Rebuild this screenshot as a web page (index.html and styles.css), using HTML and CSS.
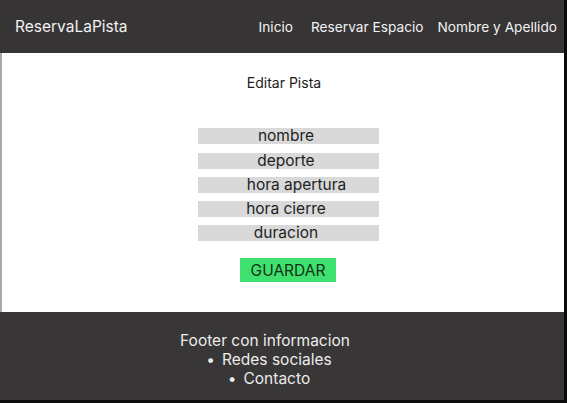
FILE: index.html
```html
<!DOCTYPE html>
<html lang="es">
<head>
<meta charset="utf-8">
<title>ReservaLaPista</title>
<link rel="stylesheet" href="styles.css">
</head>
<body>
<div class="page">
  <header class="topbar">
    <div class="brand">ReservaLaPista</div>
    <nav class="nav">
      <a href="#" class="nav-home">Inicio</a>
      <a href="#" class="nav-book">Reservar Espacio</a>
      <a href="#">Nombre y Apellido</a>
    </nav>
  </header>
  <main class="content">
    <h1 class="title">Editar Pista</h1>
    <form class="form">
      <div class="field">nombre</div>
      <div class="field gap-lg">deporte</div>
      <div class="field shift">hora apertura</div>
      <div class="field">hora cierre</div>
      <div class="field">duracion</div>
      <button type="button" class="save">GUARDAR</button>
    </form>
  </main>
  <footer class="footer">
    <div class="footer-title">Footer con informacion</div>
    <ul class="footer-list">
      <li>Redes sociales</li>
      <li>Contacto</li>
    </ul>
  </footer>
</div>
</body>
</html>
```
FILE: styles.css
```css
html, body {
  margin: 0;
  padding: 0;
}
body {
  background: #0b0b0b;
  font-family: Inter, "Liberation Sans", sans-serif;
  width: 567px;
  height: 403px;
  overflow: hidden;
}
.page {
  width: 564px;
  height: 400px;
  display: flex;
  flex-direction: column;
}
.topbar {
  height: 53px;
  flex: none;
  background: #363434;
  display: flex;
  align-items: center;
  justify-content: space-between;
  padding: 0 7px 0 15px;
  color: #f2f2f2;
}
.brand {
  font-size: 15.5px;
}
.nav {
  display: flex;
}
.nav a {
  color: #f2f2f2;
  text-decoration: none;
  font-size: 13.7px;
}
.nav .nav-home {
  margin-right: 18px;
}
.nav .nav-book {
  margin-right: 14px;
}
.content {
  flex: 1;
  background: #ffffff;
  border-left: 2px solid #a8a8a8;
  display: flex;
  flex-direction: column;
  align-items: center;
}
.title {
  margin: 21px 0 0;
  font-size: 14px;
  font-weight: 400;
  color: #1c1c1c;
  padding-left: 2px;
}
.form {
  margin-top: 37px;
  margin-left: 10px;
  display: flex;
  flex-direction: column;
  align-items: center;
  gap: 8px;
}
.field {
  width: 181px;
  height: 16px;
  background: #d9d9d9;
  font-size: 15.5px;
  line-height: 16px;
  text-align: center;
  color: #1e1e1e;
  box-sizing: border-box;
  padding-right: 4px;
}
.field.gap-lg {
  margin-top: 1px;
}
.field.shift {
  padding: 0 0 0 17px;
}
.save {
  margin-top: 9px;
  width: 96px;
  height: 24px;
  border: none;
  background: #3ee06f;
  color: #163016;
  font-family: inherit;
  font-size: 15.5px;
  padding: 0;
}
.footer {
  height: 88px;
  flex: none;
  background: #383636;
  color: #ececec;
  display: flex;
  flex-direction: column;
  align-items: center;
  padding: 19px 34px 0 0;
  box-sizing: border-box;
  font-size: 15.5px;
  line-height: 19px;
}
.footer-list {
  margin: 0;
  padding: 0;
  list-style: none;
  text-align: center;
}
.footer-list li::before {
  content: "\2022";
  margin-right: 7px;
}
.footer-list li {
  margin-left: 8px;
}
```
